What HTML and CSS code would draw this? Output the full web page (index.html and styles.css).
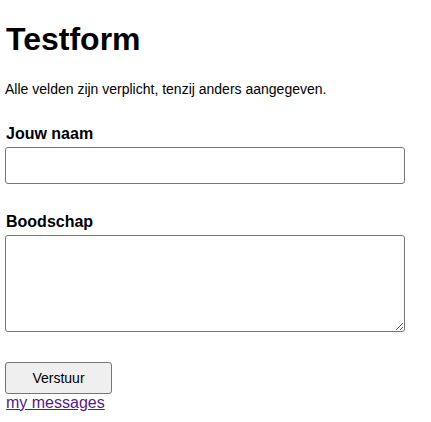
FILE: index.html
```html
<!DOCTYPE html>
<html lang="nl">
<head>
<meta charset="utf-8">
<title>Testform</title>
<link rel="stylesheet" href="styles.css">
</head>
<body>
<h1 class="title">Testform</h1>
<p class="intro">Alle velden zijn verplicht, tenzij anders aangegeven.</p>
<form class="form">
  <div class="field">
    <label class="label" for="naam">Jouw naam</label>
    <input class="input" id="naam" type="text">
  </div>
  <div class="field">
    <label class="label" for="boodschap">Boodschap</label>
    <textarea class="textarea" id="boodschap"></textarea>
  </div>
  <button class="button" type="button">Verstuur</button>
</form>
<a class="link" href="#">my messages</a>
</body>
</html>
```
FILE: styles.css
```css
html, body {
  background: #ffffff;
}
body {
  margin: 0;
  padding: 0 5px;
  font-family: "Liberation Sans", Arial, sans-serif;
  color: #000000;
}
.title {
  font-size: 32px;
  font-weight: bold;
  line-height: 37px;
  margin: 21px 0 0 1px;
}
.intro {
  font-size: 14px;
  line-height: 16px;
  margin: 23px 0 0 0;
}
.form {
  display: flex;
  flex-direction: column;
  align-items: flex-start;
  margin: 28px 0 0 0;
}
.field {
  display: flex;
  flex-direction: column;
  gap: 4px;
  margin-bottom: 29px;
}
.label {
  font-size: 16px;
  font-weight: bold;
  line-height: 18px;
  margin-left: 1px;
}
.input,
.textarea {
  box-sizing: border-box;
  width: 400px;
  border: 1px solid #767676;
  border-radius: 3px;
  background: #ffffff;
  margin: 0;
  padding: 2px;
  font-family: "Liberation Sans", Arial, sans-serif;
}
.input {
  height: 37px;
}
.textarea {
  height: 97px;
  resize: both;
}
.button {
  box-sizing: border-box;
  width: 107px;
  height: 32px;
  border: 1px solid #767676;
  border-radius: 3px;
  background: #efefef;
  color: #000000;
  font-family: "Liberation Sans", Arial, sans-serif;
  font-size: 14px;
  padding: 0;
  margin: 1px 0 0 0;
}
.link {
  display: block;
  font-size: 16px;
  line-height: 18px;
  color: #551a8b;
  text-decoration: underline;
  margin-left: 1px;
  width: max-content;
}
```
